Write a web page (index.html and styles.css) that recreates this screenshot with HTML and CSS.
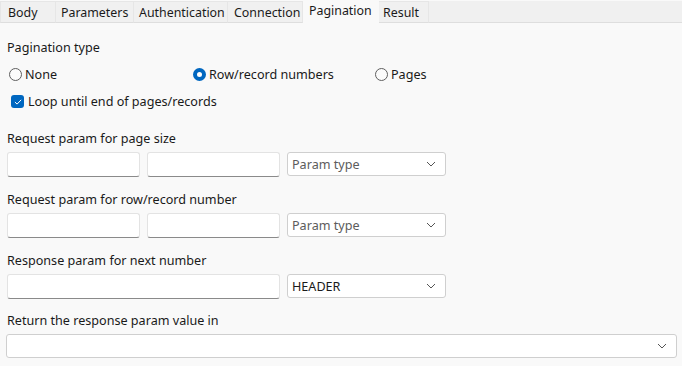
FILE: index.html
```html
<!DOCTYPE html>
<html>
<head>
<meta charset="utf-8">
<link rel="stylesheet" href="styles.css">
</head>
<body>
<div class="tabs">
  <div class="tab t-body">Body</div>
  <div class="tab t-params">Parameters</div>
  <div class="tab t-auth">Authentication</div>
  <div class="tab t-conn">Connection</div>
  <div class="tab active t-pag">Pagination</div>
  <div class="tab t-res">Result</div>
  <div class="tab-fill"></div>
</div>
<div class="content">
  <div class="label first">Pagination type</div>
  <div class="radios">
    <label class="opt"><span class="radio"></span>None</label>
    <label class="opt"><span class="radio on"></span>Row/record numbers</label>
    <label class="opt"><span class="radio"></span>Pages</label>
  </div>
  <label class="check-row"><span class="check"><svg viewBox="0 0 12 12" width="12" height="12"><path d="M3.2 6.3 L5.1 8.1 L8.9 4.1" fill="none" stroke="#fff" stroke-width="1" stroke-linecap="round" stroke-linejoin="round"/></svg></span>Loop until end of pages/records</label>

  <div class="label sec">Request param for page size</div>
  <div class="row">
    <div class="input w133"></div>
    <div class="input w133"></div>
    <div class="select w159 placeholder"><span>Param type</span><svg class="chev" viewBox="0 0 10 6" width="10" height="6"><path d="M1 1 L5 5 L9 1" fill="none" stroke="#555" stroke-width="1"/></svg></div>
  </div>

  <div class="label sec">Request param for row/record number</div>
  <div class="row">
    <div class="input w133"></div>
    <div class="input w133"></div>
    <div class="select w159 placeholder"><span>Param type</span><svg class="chev" viewBox="0 0 10 6" width="10" height="6"><path d="M1 1 L5 5 L9 1" fill="none" stroke="#555" stroke-width="1"/></svg></div>
  </div>

  <div class="label sec">Response param for next number</div>
  <div class="row">
    <div class="input w273"></div>
    <div class="select w159"><span>HEADER</span><svg class="chev" viewBox="0 0 10 6" width="10" height="6"><path d="M1 1 L5 5 L9 1" fill="none" stroke="#555" stroke-width="1"/></svg></div>
  </div>

  <div class="label sec last">Return the response param value in</div>
  <div class="row">
    <div class="select full"><span></span><svg class="chev" viewBox="0 0 10 6" width="10" height="6"><path d="M1 1 L5 5 L9 1" fill="none" stroke="#555" stroke-width="1"/></svg></div>
  </div>
</div>
</body>
</html>
```
FILE: styles.css
```css
* { box-sizing: border-box; }
html, body { margin: 0; padding: 0; }
body {
  width: 682px;
  height: 366px;
  overflow: hidden;
  background: #f9f9f9;
  font-family: "Noto Sans", "Open Sans", sans-serif;
  font-size: 12.6px;
  color: #1a1a1a;
}
.tabs {
  display: flex;
  height: 23px;
  background: #f9f9f9;
}
.tab {
  margin-top: 1px;
  height: 22px;
  background: #f0f0f0;
  border: 1px solid #e6e6e6;
  border-bottom: 1px solid #dedede;
  border-left: none;
  padding: 0 0 0 7px;
  line-height: 21px;
  color: #1a1a1a;
  white-space: nowrap;
  font-size: 12.4px;
}
.t-body { width: 56px; border-left: 1px solid #e6e6e6; }
.t-params { width: 78px; padding-left: 5px; }
.t-auth { width: 94px; padding-left: 5px; }
.t-conn { width: 75px; padding-left: 6px; }
.t-pag { width: 76px; padding-left: 6px; }
.t-res { width: 50px; padding-left: 4px; }
.tab.active {
  margin-top: 0;
  height: 23px;
  background: #f9f9f9;
  border-color: #f9f9f9;
  border-bottom: none;
  line-height: 20px;
}
.tab-fill {
  flex: 1;
  margin-top: 1px;
  height: 22px;
  background: #f0f0f0;
  border-bottom: 1px solid #dedede;
}
.content {
  padding: 0 0 0 7px;
}
.label {
  height: 17px;
  line-height: 17px;
  white-space: nowrap;
}
.label.first { margin-top: 16px; }
.label.sec { margin-top: 0; }
.label.last { margin-top: -1px; }
.radios {
  display: grid;
  grid-template-columns: 184px 182px 120px;
  margin-top: 10px;
  height: 17px;
}
.opt {
  display: flex;
  align-items: center;
  gap: 3px;
  line-height: 17px;
  padding-left: 2px;
}
.radio {
  width: 13px;
  height: 13px;
  border-radius: 50%;
  border: 1px solid #5f5f5f;
  background: #fbfbfb;
  flex: none;
}
.radio.on {
  border: 4px solid #0067c0;
  background: #fff;
}
.check-row {
  display: flex;
  align-items: center;
  gap: 4px;
  margin-top: 10px;
  height: 17px;
  padding-left: 4px;
}
.check {
  width: 13px;
  height: 13px;
  border-radius: 3px;
  background: #0067c0;
  display: flex;
  align-items: center;
  justify-content: center;
  flex: none;
}
.check-row + .label.sec { margin-top: 20px; }
.row {
  display: flex;
  gap: 7px;
  margin-top: 5px;
  margin-bottom: 14px;
}
.input {
  height: 25px;
  background: #fff;
  border: 1px solid #e3e3e3;
  border-bottom: 1px solid #8a8a8a;
  border-radius: 3px;
}
.w133 { width: 133px; }
.w273 { width: 273px; }
.select {
  height: 24px;
  background: #fff;
  border: 1px solid #cfcfcf;
  border-radius: 3px;
  display: flex;
  align-items: center;
  justify-content: space-between;
  padding: 0 9px 0 4px;
  color: #1a1a1a;
}
.select.placeholder { color: #5c5c5c; }
.w159 { width: 159px; }
.full { width: 671px; margin-left: -1px; }
.chev { flex: none; }
```
